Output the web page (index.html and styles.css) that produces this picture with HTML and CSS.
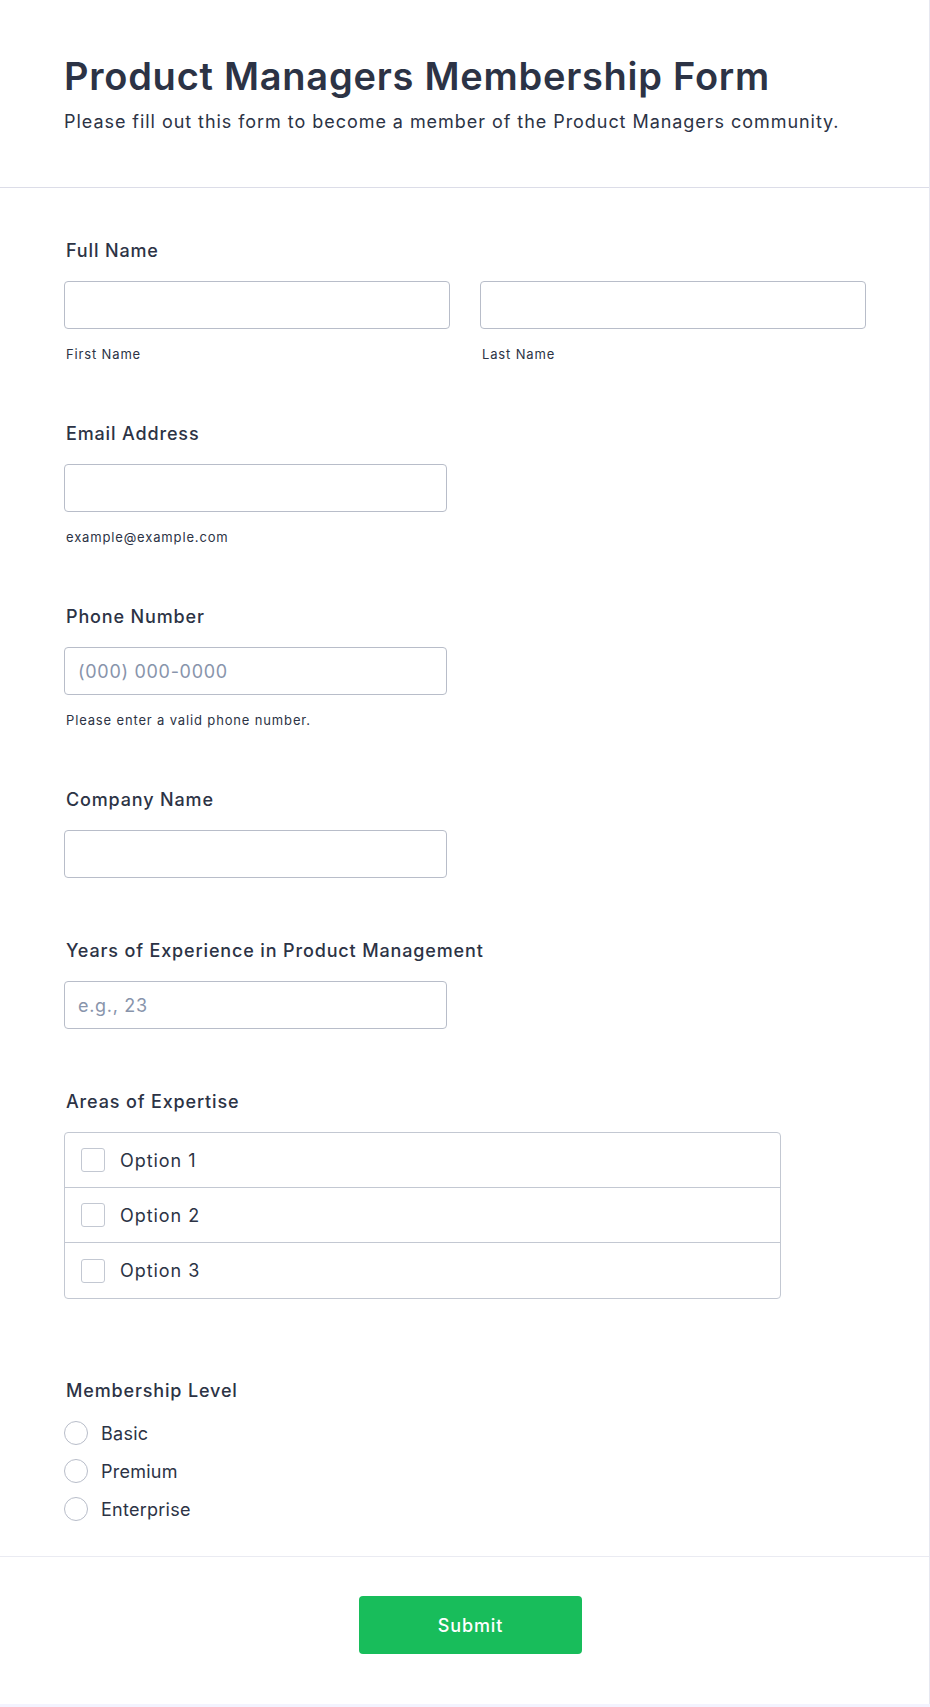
FILE: index.html
```html
<!DOCTYPE html>
<html lang="en">
<head>
    <meta charset="UTF-8">
    <meta name="viewport" content="width=device-width, initial-scale=1.0">
    <title>Product Managers Membership Form</title>
    <link rel="stylesheet" href="styles.css">
</head>
<body>
    <form class="form-all">
        <div class="form-header">
            <h1>Product Managers Membership Form</h1>
            <p>Please fill out this form to become a member of the Product Managers community.</p>
        </div>

        <div class="form-body">
            <div class="field">
                <label class="field-label">Full Name</label>
                <div class="name-row">
                    <div class="name-col">
                        <input type="text" class="text-input">
                        <span class="sublabel">First Name</span>
                    </div>
                    <div class="name-col">
                        <input type="text" class="text-input">
                        <span class="sublabel">Last Name</span>
                    </div>
                </div>
            </div>

            <div class="field">
                <label class="field-label">Email Address</label>
                <input type="email" class="text-input half">
                <span class="sublabel">example@example.com</span>
            </div>

            <div class="field">
                <label class="field-label">Phone Number</label>
                <input type="tel" class="text-input half" placeholder="(000) 000-0000">
                <span class="sublabel">Please enter a valid phone number.</span>
            </div>

            <div class="field no-sub">
                <label class="field-label">Company Name</label>
                <input type="text" class="text-input half">
            </div>

            <div class="field no-sub">
                <label class="field-label">Years of Experience in Product Management</label>
                <input type="text" class="text-input half" placeholder="e.g., 23">
            </div>

            <div class="field no-sub checks-field">
                <label class="field-label">Areas of Expertise</label>
                <div class="check-list">
                    <label class="check-row"><span class="checkbox"></span>Option 1</label>
                    <label class="check-row"><span class="checkbox"></span>Option 2</label>
                    <label class="check-row"><span class="checkbox"></span>Option 3</label>
                </div>
            </div>

            <div class="field radios-field">
                <label class="field-label">Membership Level</label>
                <div class="radio-list">
                    <label class="radio-row"><span class="radio"></span>Basic</label>
                    <label class="radio-row"><span class="radio"></span>Premium</label>
                    <label class="radio-row"><span class="radio"></span>Enterprise</label>
                </div>
            </div>
        </div>

        <div class="form-footer">
            <button type="button" class="submit-btn">Submit</button>
        </div>
    </form>
</body>
</html>
```

FILE: styles.css
```css
* {
    box-sizing: border-box;
}
body {
    margin: 0;
    font-family: Inter, 'Noto Sans', sans-serif;
    background: #f3f3fe;
    color: #2c3345;
}
.form-all {
    background: #fff;
    border-right: 1px solid #e6e7f0;
    margin-bottom: 3px;
}
.form-header {
    padding: 53px 64px 52px;
    border-bottom: 1px solid #dcdde8;
}
.form-header h1 {
    margin: 0;
    font-size: 38px;
    line-height: 46px;
    font-weight: 600;
    letter-spacing: 0.75px;
}
.form-header p {
    margin: 10px 0 0;
    font-size: 18px;
    line-height: 26px;
    letter-spacing: 0.95px;
}
.form-body {
    padding: 51px 64px 28px;
}
.field {
    display: flex;
    flex-direction: column;
    margin-bottom: 59px;
}
.field.no-sub {
    margin-bottom: 61px;
}
.field.checks-field {
    margin-bottom: 80px;
}
.field.radios-field {
    margin-bottom: 0;
}
.field-label {
    font-size: 18px;
    line-height: 24px;
    font-weight: 500;
    letter-spacing: 0.85px;
    padding-left: 2px;
    margin-bottom: 18px;
}
.name-row {
    display: flex;
    gap: 30px;
    width: 802px;
}
.name-col {
    flex: 1;
    display: flex;
    flex-direction: column;
}
.text-input {
    height: 48px;
    width: 100%;
    border: 1px solid #b8bdc9;
    border-radius: 4px;
    padding: 0 13px;
    font-family: inherit;
    font-size: 18px;
    letter-spacing: 0.7px;
    color: #2c3345;
    background: #fff;
}
.text-input.half {
    width: 383px;
}
.text-input::placeholder {
    color: #8894ab;
}
.sublabel {
    margin-top: 16px;
    padding-left: 2px;
    font-size: 13px;
    line-height: 18px;
    letter-spacing: 0.85px;
}
.check-list {
    width: 717px;
    border: 1px solid #c3c8d2;
    border-radius: 4px;
}
.check-row {
    display: flex;
    align-items: center;
    height: 55px;
    padding-left: 16px;
    font-size: 18px;
    letter-spacing: 0.95px;
    border-bottom: 1px solid #c3c8d2;
}
.check-row:last-child {
    border-bottom: none;
}
.checkbox {
    width: 24px;
    height: 24px;
    border: 1px solid #c3c8d2;
    border-radius: 3px;
    margin-right: 15px;
}
.field.radios-field .field-label {
    margin-bottom: 11px;
}
.radio-row {
    display: flex;
    align-items: center;
    height: 38px;
    font-size: 18px;
    letter-spacing: 0.25px;
}
.radio {
    width: 24px;
    height: 24px;
    border: 1px solid #b8bdc9;
    border-radius: 50%;
    margin-right: 13px;
}
.form-footer {
    border-top: 1px solid #eaebf2;
    padding: 39px 0 50px 12px;
    display: flex;
    justify-content: center;
}
.submit-btn {
    width: 223px;
    height: 58px;
    background: #18bd5b;
    color: #fff;
    border: none;
    border-radius: 4px;
    font-family: inherit;
    font-size: 18px;
    font-weight: 500;
    letter-spacing: 0.9px;
}
```
